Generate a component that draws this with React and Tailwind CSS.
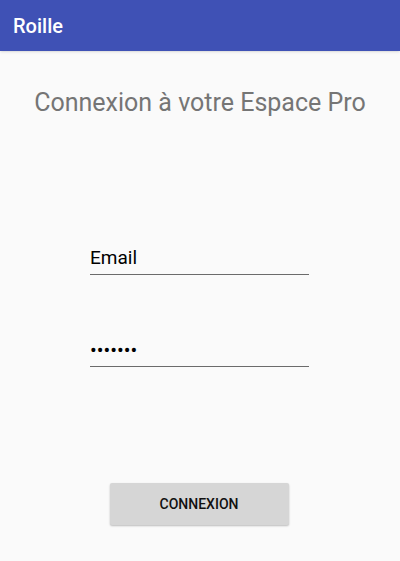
export default function App() {
  return (
    <div className="w-[400px] h-[561px] bg-[#fafafa] flex flex-col" style={{ fontFamily: "Roboto, 'Liberation Sans', sans-serif" }}>
      {/* App bar */}
      <div className="h-[51px] bg-[#3f51b5] flex items-center px-[13px] shadow-sm">
        <span className="text-white text-[20px] font-medium">Roille</span>
      </div>

      {/* Title */}
      <h1 className="mt-[37px] text-center text-[25px] leading-[30px] text-[#757575]">
        Connexion à votre Espace Pro
      </h1>

      {/* Form */}
      <div className="mt-[128px] ml-[90px] w-[219px] flex flex-col">
        <div className="border-b border-[#6b6b6b] pb-[3px]">
          <input
            type="text"
            defaultValue="Email"
            className="w-full bg-transparent outline-none text-[19px] leading-[24px] text-black"
          />
        </div>
        <div className="mt-[63px] border-b border-[#6b6b6b] pb-[2px]">
          <input
            type="password"
            defaultValue="1234567"
            className="w-full bg-transparent outline-none text-[20px] leading-[24px] text-black"
          />
        </div>
      </div>

      {/* Button */}
      <div className="mt-[116px] flex justify-center">
        <button className="w-[179px] h-[42px] ml-[-2px] bg-[#d6d6d6] rounded-[2px] shadow-[0_1px_2px_rgba(0,0,0,0.25)] text-[14px] font-medium text-[#111]">
          CONNEXION
        </button>
      </div>
    </div>
  );
}
